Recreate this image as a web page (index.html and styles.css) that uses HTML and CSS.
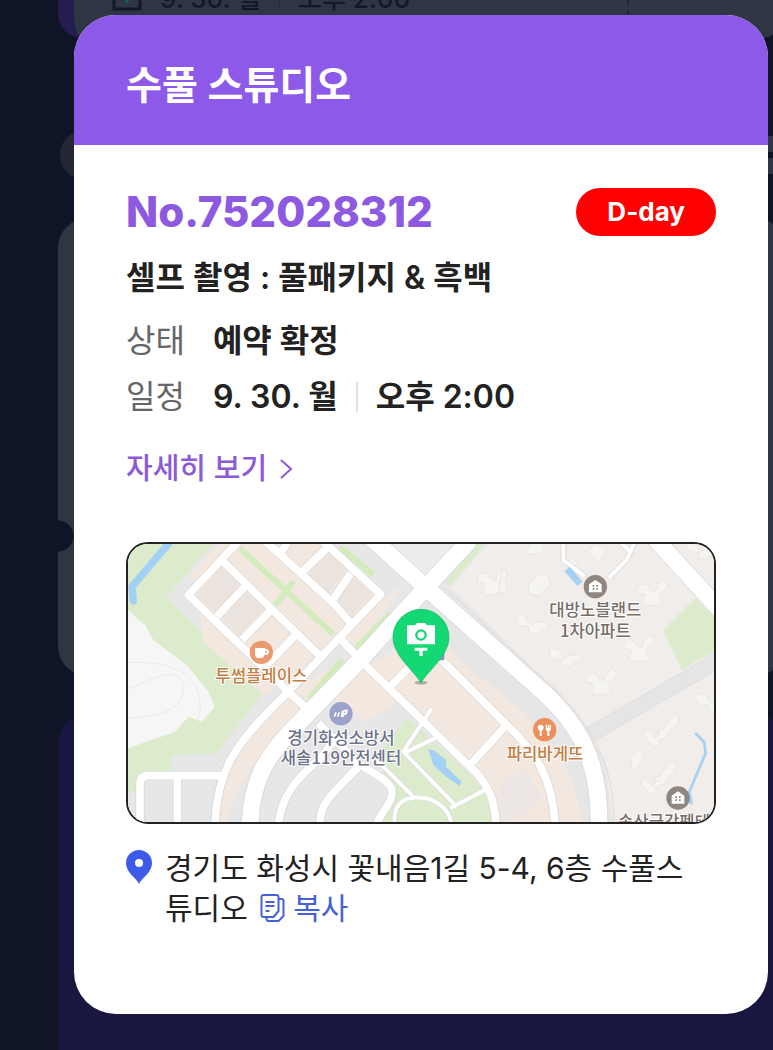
FILE: index.html
```html
<!DOCTYPE html>
<html lang="ko">
<head>
<meta charset="utf-8">
<meta name="viewport" content="width=device-width, initial-scale=1">
<title>수풀 스튜디오</title>
<link rel="stylesheet" href="styles.css">
</head>
<body>
<div class="screen">
  <div class="backdrop" aria-hidden="true">
    <div class="ticket">
      <div class="ticket-row">
        <svg class="ticket-check" viewBox="0 0 30 30"><rect x="2" y="2" width="26" height="26" fill="none" stroke="#131829" stroke-width="3"/><path d="M9 14l6 6 7-8" fill="none" stroke="#1b5a4c" stroke-width="3"/></svg>
        <span>9. 30. 월</span><span class="ticket-rule"></span><span>오후 2:00</span>
      </div>
      <span class="ticket-tear"></span>
    </div>
    <div class="host"><span class="avatar"></span><span class="host-bar"></span></div>
    <div class="panel"></div>
    <div class="promo"></div>
  </div>

  <main class="modal" role="dialog" aria-labelledby="studio">
    <header class="modal-head"><h1 id="studio">수풀 스튜디오</h1></header>
    <div class="modal-body">
      <div class="number-row">
        <strong class="number">No.752028312</strong>
        <span class="badge">D-day</span>
      </div>
      <h2 class="product">셀프 촬영 : 풀패키지 &amp; 흑백</h2>
      <dl class="facts">
        <div class="fact"><dt>상태</dt><dd>예약 확정</dd></div>
        <div class="fact"><dt>일정</dt><dd>9. 30. 월<span class="rule"></span>오후 2:00</dd></div>
      </dl>
      <a class="more" href="#detail">자세히 보기
        <svg class="chevron" viewBox="0 0 14 22"><path d="M2 2l10 9-10 9" fill="none" stroke="currentColor" stroke-width="2"/></svg>
      </a>

      <div class="map">
        <svg class="map-art" viewBox="24 27 1758 834" preserveAspectRatio="xMidYMid slice" role="img" aria-label="수풀 스튜디오 지도">
          <defs>
            <path id="tower" d="M-45-20l12-12 16 4 12 18h14l6-20 18-14 12 12-4 16-22 12 10 30-20 8h-34l-6-8 8-26-24-4z"/>
            <path id="slab" d="M-48-14l14-10 18 8 4 16 14 8 10-10 34 2 4 16-22 4-12 14-26-6 2-16-26-2-12-12z"/>
            <path id="stair" d="M-50 6l12-14 16 8 6 14 16-12-6-12 16-4 16-28 22-16 12 10-10 22-14 12-14 24-26 10 4 12-20 10z"/>
            <g id="roads" fill="none" stroke-linejoin="round">
              <g class="lane">
                <path d="M355 20L205 180 510 475 560 520"/><path d="M310 80L605 368"/>
                <path d="M375 155L290 245M450 228L365 315M525 302L440 390"/>
                <path d="M432 15L550 122 640 205 690 262M620 40L540 118M692 115L635 200M505 20L478 58"/>
                <path d="M605 15L782 178 505 470C350 620 290 700 285 870"/>
                <path d="M655 305L722 375"/>
                <path d="M60 870V745Q62 722 85 722H310M172 722V870"/>
                <path d="M475 870C485 780 530 730 600 670L665 590"/>
                <path d="M595 565L720 690"/>
                <path d="M600 870C600 800 630 785 720 690C790 730 820 750 816 775C813 815 780 830 770 870"/>
                <path d="M730 385L1050 695C1110 750 1125 800 1128 870"/>
                <path d="M810 455L920 345 970 380 1160 570C1250 650 1300 740 1305 870"/>
                <path d="M1050 690L1155 575"/>
              </g>
              <g class="avenue">
                <path d="M1050 15L915 160 720 375 545 555C450 650 395 720 390 870"/>
                <path d="M755 10L915 155 1240 445C1380 560 1440 680 1437 870"/>
                <path d="M1595 0L1800 225"/>
              </g>
              <g class="footway">
                <path d="M935 520L850 650 1010 815M850 655L955 605M770 675L880 785M1095 765L990 820M825 870C815 800 860 780 920 790C960 800 990 830 995 870"/>
                <path d="M1330 20V75L1395 125M1545 20L1520 75 1465 130M1500 20L1530 50"/>
              </g>
            </g>
          </defs>

          <path fill="#e7e7e8" d="M0 0h1800v900H0z"/>
          <path fill="#dcebcb" d="M0 0H300L140 190 430 470 340 590 290 655 155 660V705L60 715 44 772H0z"/>
          <path fill="#f6f6f6" d="M0 205L75 270 100 315 200 390 265 470 285 515 245 560 205 545 165 590 0 648z"/>
          <path class="contour" d="M24 382C140 380 190 400 225 450C250 500 240 540 230 560M24 548C120 545 160 530 185 490C200 440 180 415 140 420C90 425 60 455 24 460"/>
          <path fill="none" stroke="#a3d0f5" stroke-width="22" stroke-linecap="round" stroke-linejoin="round" d="M155 15L36 155 40 198"/>

          <g fill="#f3e8df">
            <path d="M300 27L205 125 235 150 345 27zM240 225L470 455 430 480 250 320z"/>
            <path d="M500 480L550 525C450 620 340 740 320 861H300C290 740 330 690 390 590z"/>
            <path d="M345 27H615L790 185 505 470 200 180z"/>
            <path d="M750 210L850 150 700 350 655 300z"/>
            <path d="M660 380L700 420 600 510 520 470z"/>
            <path d="M740 400L830 500 740 560 640 490z"/>
            <path d="M750 390L900 300 970 310 1190 500C1330 640 1380 740 1390 861H1140C1130 770 1100 730 1050 690L820 460z"/>
          </g>
          <path fill="#ebe4de" d="M305 97L362 150 290 232 228 180zM380 165L435 220 360 300 300 245zM630 50L685 95 620 180 560 125zM700 125L755 175 690 250 635 200z"/>
          <path fill="#e6e6e7" d="M915 185L1230 470C1380 610 1410 740 1410 861H1385C1370 730 1320 650 1200 520L1010 370 960 300 800 340z"/>
          <path fill="#ece7e4" d="M1140 750L1210 700 1270 790 1180 861H1140z"/>
          <path fill="none" stroke="#d3ebbd" stroke-width="18" d="M360 40L640 298M462 215L522 138M660 35L760 120M812 235L702 345M668 372L566 492"/>
          <path fill="#dcebcb" d="M770 670L860 545 1050 720 1100 780 1115 861H780L815 770z"/>
          <path fill="#a3d0f5" d="M925 642L945 648 978 675V695L1025 740 1018 752 975 722 940 690z"/>
          <path fill="#eeecea" d="M795 20L915 120 1030 20z"/>
          <path fill="#f0edeb" d="M1110 20L990 155 1240 400C1320 470 1370 520 1400 580L1455 680 1480 861H1800V20z"/>
          <path fill="none" stroke="#dcebcb" stroke-width="22" d="M1085 20L985 148"/>
          <path fill="none" stroke="#dcdcdc" stroke-width="48" d="M1400 605L1800 372"/>
          <path fill="none" stroke="#e5e5e6" stroke-width="44" d="M1395 608L1800 372"/>
          <path fill="none" stroke="#dedede" stroke-width="3" d="M970 155L1250 415C1420 560 1480 680 1482 861"/>
          <path fill="#dcebcb" d="M1725 190L1800 260V340L1685 405 1630 285z"/>

          <g class="buildings">
            <use href="#tower" x="1598" y="178"/><use href="#tower" x="1558" y="345"/><use href="#tower" x="1445" y="445"/><use href="#tower" x="1118" y="145"/>
            <use href="#slab" x="1235" y="262"/><use href="#slab" x="1335" y="362"/><use href="#slab" x="1775" y="498"/><use href="#slab" x="1745" y="40"/>
            <use href="#stair" x="1620" y="595"/><use href="#stair" x="1610" y="738"/>
            <path d="M1225 150l30-32 32 6 4 26-34 32-28-6zM1535 665l24-26 14 20-18 38-22 6zM1218 58l8-30 28-10 20 22-6 14zM1400 50l30-24 30 18-24 34zM1145 105l16 8-6 28 8 28-26 6zM1340 85l16-18 16 18-14 16z"/>
          </g>
          <use href="#roads" class="casing"/>
          <use href="#roads" class="surface"/>
          <path fill="none" stroke="#a3d0f5" stroke-width="20" d="M1341 102L1380 146"/>
          <path fill="none" stroke="#a3d0f5" stroke-width="8" stroke-linejoin="round" d="M1726 595L1752 620 1757 655 1725 730 1708 770 1715 808M1708 770V805"/>

          <g transform="translate(424 352)"><circle r="35" fill="#ea9a6c"/><path fill="#fff" d="M-19-13h31v4h5q6 0 6 8t-9 8h-4q-3 10-12 10h-6q-11 0-11-13z"/><circle cx="14" cy="-2" r="3" fill="#ea9a6c"/></g>
          <g transform="translate(663 536)"><circle r="35" fill="#9ba3cb"/><path fill="none" stroke="#fff" stroke-width="5" d="M-20 9l5-13M-10 9l5-13"/><path fill="#fff" d="M-1 9L2-7Q6-13 20-12 21 2 10 5L7 11zM9-6l-2 5 5-1 2-5z" fill-rule="evenodd"/></g>
          <g transform="translate(1274 584)"><circle r="35" fill="#ea8f5d"/><path fill="#fff" d="M-12-15q9 0 9 9 0 6-6 8v17h-6V2q-6-2-6-8 0-9 9-9zM3-15h4v10h2v-10h4v10h2v-10h4v12q0 6-5 7v15H8V4q-5-1-5-7z"/></g>
          <g id="home" transform="translate(1426 155)"><circle r="35" fill="#8f867f"/><path fill="#fff" d="M0-20L19-7V17H-19V-7z"/><path fill="#8f867f" d="M-8-5h5v5h-5zM3-5h5v5H3zM-8 4h5v5h-5zM3 4h5v5H3z"/></g>
          <use href="#home" x="248" y="634"/>

          <g class="labels">
            <text class="shop" x="424" y="442">투썸플레이스</text>
            <text class="office" x="663" y="626">경기화성소방서</text>
            <text class="office" x="663" y="688">새솔119안전센터</text>
            <text class="home" x="1426" y="244">대방노블랜드</text>
            <text class="home" x="1426" y="306">1차아파트</text>
            <text class="shop" x="1275" y="676">파리바게뜨</text>
            <text class="home" x="1632" y="878">송산금강펜테</text>
          </g>

          <path fill="#8d95b5" d="M955 350h18v26h-18z"/>
          <ellipse cx="903" cy="443" rx="20" ry="6" fill="#000" opacity=".25"/>
          <path fill="#14d873" stroke="#0cb85e" stroke-width="2" d="M903 444C885 410 819 362 819 307a84 84 0 01168 0c0 55-66 103-84 137z"/>
          <path fill="#fff" d="M861 271h24l6-7h24l6 7h24v57h-84zM884 338h38v9h-14v16h-10v-16h-14z"/>
          <circle cx="903" cy="300" r="14" fill="none" stroke="#14d873" stroke-width="7"/>
        </svg>
      </div>

      <div class="address">
        <svg class="pin" viewBox="0 0 26 34"><path fill="#3d5be8" fill-rule="evenodd" d="M13 34C10 27 0 23 0 13a13 13 0 0126 0c0 10-10 14-13 21zM13 9a4 4 0 100 8 4 4 0 000-8z"/></svg>
        <p class="address-text">경기도 화성시 꽃내음1길 5-4, 6층 수풀스튜디오 <button class="copy" type="button"><svg class="copy-icon" viewBox="0 0 24 28"><path fill="none" stroke="currentColor" stroke-width="2" stroke-linejoin="round" d="M3 1h13q2 0 2 2v14l-5 6H3q-2 0-2-2V3q0-2 2-2zM18 5h3q2 0 2 2v15l-5 5H8q-2 0-2-3M5 8h9M5 12h9M5 17h4"/></svg>복사</button></p>
      </div>
    </div>
  </main>
</div>
</body>
</html>
```
FILE: styles.css
```css
* { box-sizing: border-box; }

body {
  margin: 0;
  background: #0f1526;
  color: #222;
  font-family: Inter, "Noto Sans CJK KR", sans-serif;
}

h1, h2, p, dl, dd { margin: 0; }

.screen {
  position: relative;
  min-height: 100vh;
  overflow: hidden;
  padding: 15px 5px 36px 74px;
}

/* dimmed page behind the dialog */
.backdrop {
  position: absolute;
  inset: 0 -12px 0 58px;
  display: flex;
  flex-direction: column;
}

.ticket {
  display: flex;
  height: 38px;
  border-left: 16px solid #251c50;
  border-radius: 0 0 24px 24px;
  background: #2f3543;
  color: #131829;
  font-size: 26px;
  font-weight: 500;
}

.ticket-row {
  display: flex;
  flex: 1;
  align-items: center;
  height: 24px;
  margin-top: -16px;
  padding-left: 38px;
  white-space: nowrap;
}

.ticket-check { width: 30px; height: 30px; margin-right: 18px; }
.ticket-rule { width: 1px; height: 26px; margin: 0 18px; background: #272c3a; }
.ticket-tear { margin-right: 156px; border-left: 2px dashed #222838; }

.host {
  display: flex;
  align-items: center;
  justify-content: space-between;
  height: 50px;
  margin: 92px 0 38px;
}

.avatar {
  width: 50px;
  height: 50px;
  margin-left: 2px;
  border-radius: 50%;
  background: #252634;
}

.host-bar {
  width: 32px;
  height: 38px;
  border: solid #2f3543;
  border-width: 16px 0;
}

.panel {
  height: 458px;
  border-radius: 30px;
  background: radial-gradient(circle at 0 318px, #0f1526 15px, #2f3543 16px);
}

.promo {
  flex: 1;
  margin-top: 38px;
  border-radius: 30px 30px 0 0;
  background: #19173f;
}

.modal {
  position: relative;
  overflow: hidden;
  border-radius: 42px;
  background: #fff;
}

.modal-head {
  padding: 42px 52px 32px;
  background: #8c59e8;
  color: #fff;
}

.modal-head h1 {
  font-size: 39px;
  font-weight: 600;
  line-height: 56px;
}

.modal-body { padding: 43px 52px 86px; }

.number-row {
  display: flex;
  align-items: center;
  justify-content: space-between;
}

.number {
  color: #8c59e0;
  font-size: 42px;
  font-weight: 800;
  line-height: 48px;
}

.badge {
  padding: 0 31px;
  border-radius: 24px;
  background: #f00;
  color: #fff;
  font-size: 26px;
  font-weight: 700;
  line-height: 48px;
}

.product {
  margin-top: 22px;
  font-size: 32px;
  font-weight: 600;
  line-height: 40px;
}

.facts {
  display: grid;
  gap: 16px;
  margin-top: 23px;
  font-size: 32px;
  line-height: 40px;
}

.fact { display: flex; gap: 28px; }
.fact dt { color: #666; }
.fact dd { display: flex; align-items: center; font-weight: 600; }

.rule {
  width: 2px;
  height: 30px;
  margin: 0 18px;
  background: #e2e2e2;
}

.more {
  display: flex;
  gap: 12px;
  align-items: center;
  width: max-content;
  margin-top: 32px;
  color: #8c59d8;
  font-size: 29px;
  font-weight: 500;
  line-height: 40px;
  text-decoration: none;
}

.chevron { width: 14px; height: 22px; }

.map {
  height: 282px;
  margin-top: 53px;
  overflow: hidden;
  border: 2px solid #222;
  border-radius: 22px;
}

.map-art {
  display: block;
  width: 100%;
  height: 100%;
  font-family: "Noto Sans CJK KR", sans-serif;
}

.contour { fill: none; stroke: #e2e2e2; stroke-width: 2; }
.buildings { fill: #f6f4f0; stroke: #e6e2dd; stroke-width: 2; }
.surface { stroke: #fff; }
.lane { stroke-width: 23px; }
.avenue { stroke-width: 50px; }
.footway { stroke-width: 12px; }

/* the casing widens the road net by a thin grey edge */
.casing {
  stroke: #d6d6d7;
  filter: drop-shadow(2px 0 0 #d6d6d7) drop-shadow(-2px 0 0 #d6d6d7);
}

.labels {
  font-size: 50px;
  font-weight: 500;
  text-anchor: middle;
  paint-order: stroke;
  stroke: #fff;
  stroke-width: 6px;
  stroke-linejoin: round;
}

.shop { fill: #c47c40; }
.office { fill: #6c7189; }
.home { fill: #766d67; }

.address {
  display: flex;
  gap: 13px;
  align-items: flex-start;
  margin-top: 24px;
}

.pin { flex: none; width: 26px; height: 34px; margin-top: 2px; }

.address-text {
  padding-right: 24px;
  font-size: 30px;
  line-height: 40px;
}

.copy {
  display: inline-flex;
  gap: 8px;
  align-items: center;
  margin-left: 4px;
  padding: 0;
  border: 0;
  background: none;
  color: #4462d6;
  font: inherit;
  vertical-align: top;
}

.copy-icon { width: 25px; height: 28px; }
```
